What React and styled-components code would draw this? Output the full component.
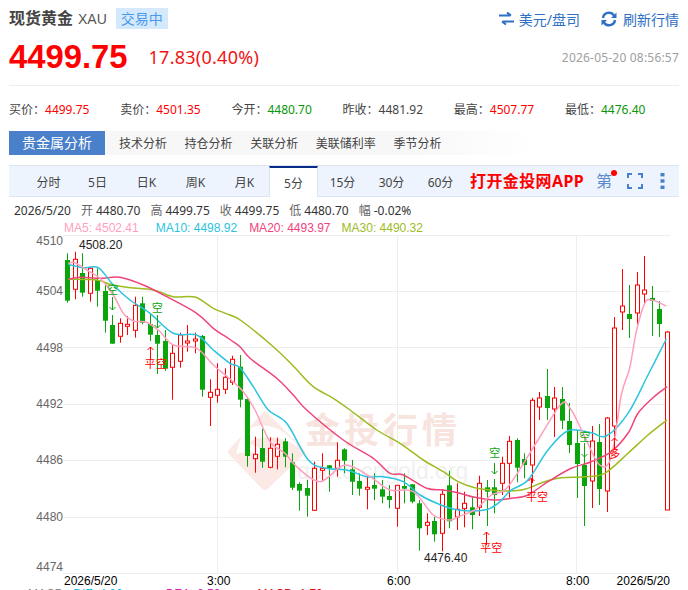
import React from 'react';
import styled, { createGlobalStyle } from 'styled-components';

const Global = createGlobalStyle`
  html, body { margin: 0; padding: 0; background: #fff; height: 590px; overflow: hidden; }
  body { font-family: "Noto Sans", "Noto Sans CJK SC", sans-serif; }
  * { box-sizing: border-box; }
`;
const CJK = `"Noto Sans", "Noto Sans CJK SC", sans-serif`;
const ARIAL = `"Liberation Sans", "Noto Sans CJK SC", sans-serif`;

const Page = styled.div`width: 688px; height: 590px; overflow: hidden; position: relative;`;
const Section = styled.div`margin: 0 9px;`;

const Header = styled(Section)`display: flex; align-items: center; height: 21px; margin-top: 8px;`;
const Title = styled.span`font-size: 16px; font-weight: 700; color: #444; line-height: 21px;`;
const Code = styled.span`font-size: 14px; color: #555; margin-left: 5px; font-family: ${ARIAL};`;
const Badge = styled.span`width: 52px; height: 21px; margin-left: 9px; background: #d5e9fd; color: #4a9ae8; font-size: 14px; line-height: 21px; text-align: center;`;
const Spacer = styled.span`flex: 1;`;
const Action = styled.span`display: flex; align-items: center; gap: 5px; color: #2f6fc4; font-size: 14px; margin-left: ${p => p.$ml || 0}px; white-space: nowrap;`;

const PriceRow = styled(Section)`display: flex; align-items: center; height: 38px; margin-top: 9px;`;
const Price = styled.span`font: 700 32.8px ${ARIAL}; color: #f00;`;
const Change = styled.span`font-size: 18px; color: #f01414; margin-left: 21px; letter-spacing: 0.25px;`;
const Stamp = styled.span`margin-left: auto; font-size: 12px; color: #a0a0a0; letter-spacing: 0.2px;`;

const Stats = styled(Section)`display: grid; grid-template-columns: repeat(6, 111.2px); height: 46px; margin-top: 9px; border-top: 1px solid #eee; align-items: center; padding-top: 1px;`;
const Stat = styled.span`font-size: 12px; color: #444; white-space: nowrap;`;
const StatValue = styled.span`color: ${p => p.$c};`;

const Tabs = styled(Section)`display: flex; height: 24px; background: linear-gradient(90deg, #f7f7f7 0, #f7f7f7 60%, #fff 78%); align-items: center;`;
const TabOn = styled.span`width: 96px; height: 24px; background: #4a7fc9; color: #fff; font-size: 14px; line-height: 24px; text-align: center; margin-right: 14px;`;
const TabItem = styled.span`font-size: 12px; color: #444; margin-right: 17.6px;`;

const Tools = styled(Section)`display: flex; height: 32px; margin-top: 10px; padding-left: 15px; background: #eef4fd; border-top: 1px solid #dde5f2; border-bottom: 1px solid #dde5f2; align-items: stretch; position: relative;`;
const ToolTab = styled.span`
  width: 49px; font-size: 12px; text-align: center; line-height: 34px; color: #444;
  ${p => p.$on ? `background:#fff; border-top:2px solid #0a2a8a; border-left:1px solid #dde5f2; border-right:1px solid #dde5f2; margin-bottom:-1px; line-height:32px;` : ''}
`;
const AppLink = styled.span`margin-left: 5px; font-size: 16px; font-weight: 700; color: #f00; line-height: 31px; width: 114px; white-space: nowrap; letter-spacing: 0.4px;`;
const Di = styled.span`margin-left: 12px; font-size: 16px; color: #5a8ad0; line-height: 31px; position: relative; width: 16px;`;
const Dot = styled.i`position: absolute; left: 15px; top: 4px; width: 6px; height: 6px; border-radius: 50%; background: #f00;`;
const ToolIcon = styled.svg`align-self: center; margin-left: ${p => p.$ml}px; flex: none;`;

const InfoRow = styled.div`display: flex; gap: 10px; height: 16px; margin-top: 6px; padding-left: 14px; font: 12px/16px ${CJK}; color: #333; white-space: nowrap;`;
const InfoItem = styled.span`b { font-weight: 400; color: #666; margin-right: 3px; }`;
const MaRow = styled.div`display: flex; height: 16px; padding-left: 64px; padding-top: 1px; font: 12px/16px ${ARIAL}; white-space: nowrap;`;
const MaItem = styled.span`color: ${p => p.$c}; margin-right: ${p => p.$mr}px;`;

const ChartSvg = styled.svg`display: block; margin-top: -2px; flex: none;`;
const AxisText = styled.text`font: 12px ${ARIAL}; fill: ${p => p.$c || '#666'}; text-anchor: ${p => p.$a || 'start'};`;
const SignalText = styled.text`font: 11px ${CJK}; fill: ${p => p.$c}; text-anchor: middle;`;
const MarkText = styled.text`font: 700 ${p => p.$s}px ${CJK}; fill: ${p => p.$c};`;
const MarkUrl = styled.text`font: 23px ${ARIAL}; fill: #f0f0f0;`;

const Macd = styled.div`position: absolute; left: 28px; top: 587px; display: flex; font: 12px/14px ${ARIAL}; white-space: nowrap;`;
const MacdItem = styled.span`color: ${p => p.$c}; margin-right: ${p => p.$mr}px;`;

const R = 'R', G = 'G';
const candles = [
[G,253.3,260,300.7,302.7],[R,251.7,259.3,289.3,299.3],[G,253.3,273,292.7,296.7],[R,266.7,268.3,293.3,301.7],
[G,268.3,280,290.7,306.7],[G,285,291,320.7,332.7],[G,315,325,343.7,343.7],[R,318.3,323.3,336.3,342.7],
[R,316,324.3,325,335],[R,296.7,305.3,330.3,337.7],[G,296.7,303.3,322.7,324.3],[G,313.3,324,334.7,341],
[G,330,335,343.7,374],[G,330,341,368.7,370.7],[R,345,353.3,367.3,399.7],[R,332.7,335,361.3,367.7],
[R,325,341,341.7,351.7],[R,332.7,339,339.7,353.3],[G,335,336,389.7,396.7],[R,379.3,392.3,397.3,426],
[R,363.3,389.3,395.3,402.7],[R,368.3,377.3,389.3,394],[R,355.7,359.3,382.3,385],[G,355,366.7,399.7,407.3],
[G,397.3,399,456,466.7],[R,436.7,454.3,458.7,472.7],[G,429,448,461.7,467.7],[R,437.3,448.3,467.3,468.3],
[R,437.7,444.3,456.3,469.3],[G,438.3,441.3,456.7,467.3],[G,453.3,462.3,487.7,490],[G,482.3,484,490.7,510.7],
[G,480,488,495.7,516.7],[R,461.7,468.3,510.3,510.7],[R,453.3,468.3,469,482],[G,465,465.3,468.3,491.7],
[R,442.3,460.3,468.3,476.7],[G,448.3,449.3,460.7,473.3],[G,460,469.3,481.7,495],[G,473.3,481,488.7,495.7],
[R,476,487.3,489.3,509.3],[G,473.3,485,488.7,500],[G,480,489.3,496.7,503.3],[G,485,496,500,508.3],
[R,485,485.3,508.3,526.7],[G,473.3,486,488.7,503.3],[G,484,484.3,501.7,503.3],[G,500,503.3,528.3,550.7],
[R,513.3,522.3,525.3,535],[G,516.7,521,534.3,541.7],[R,489,494.3,533.3,551.3],[G,470.7,485.3,521.3,528.3],
[R,483.3,509.3,517,530],[R,491.7,503.3,508.7,527.3],[G,497.3,507.3,515,529.3],[R,475.7,483.3,507.3,516],
[G,480,487.3,491.7,526],[G,479,487.3,495,513.3],[R,456.7,463.3,483.3,495],[R,436,441.3,463.3,497.7],
[G,438.3,440,467.7,482.3],[G,453.3,459,465,478.3],[R,398,400.3,465,483],[R,392,398,407,420],
[G,369,396,408,420],[R,387,398,409,437],[G,387,399,420.7,429],[G,403,421,445,453],
[G,430,443,464,498],[G,443,465,486,526],[R,426,441,481,508],[G,424,442,489,505],
[R,417,418,491,512],[R,317,328,426,447],[R,269,306,312,330],[G,285,314,319,338],
[R,272,285,313,324],[R,256,290,294,305],[G,286,298,301,336],[G,301,309,324,337],[R,331,332,510,510],
];

const ma30 = [[68.3,279.3],[96.7,280],[110,284.3],[126.7,287.3],[153.3,290],[173.3,296.7],[195,297],[213.3,308.3],[230,315],[241.7,321],[273.3,346.7],[293.3,366],[313.3,386.7],[333.3,398.3],[350,410],[376.7,430],[400,443.3],[423.3,460],[443.3,471.7],[458,481.7],[474.7,487.7],[491.3,490],[508,491],[524.7,489.3],[544.7,481.7],[561.3,477.7],[584.7,476.7],[604.7,473.3],[628,453.3],[648,435],[667,420]];
const ma20 = [[68.3,279.3],[80,277.3],[100,278.3],[120,277.3],[143.3,285],[166.7,296.7],[196.7,313.3],[213.3,328.3],[230,339.5],[240,346.7],[250,358.3],[276.7,378.3],[293.3,395],[306.7,410],[343.3,440],[373.3,458.3],[390,473.3],[403.3,475],[426.7,488.3],[443.3,490],[458,492.7],[474.7,497.3],[494.7,500],[511.3,498.3],[528,495],[548,481.7],[571.3,468.3],[591.3,461.7],[611.3,451.7],[628,433.3],[638,413.3],[653,397.7],[667,386.7]];
const ma10 = [[68.3,264.3],[83.3,267.7],[98.3,267.7],[113.3,285],[130,300],[150,313.3],[173.3,333.3],[196.7,335],[213.3,350],[230,363.3],[240,367.7],[253.3,386.7],[268.3,410],[286.7,423.3],[308.3,460],[326.7,468.3],[346.7,470],[366.7,476.7],[383.3,476.7],[403.3,481.7],[420,495],[436.7,503.3],[458,510],[484.7,510],[498,503.3],[511.3,490],[528,480],[548,450],[568,430.7],[591.3,432.7],[606.3,436],[628,413.3],[648,375],[666.3,339]];
const ma5 = [[68.3,263.3],[75,262.7],[86.7,270],[100,278.3],[113.3,295],[123.3,313.3],[133.3,321],[146.7,322.3],[160,331.7],[173.3,345],[196.7,348.3],[213.3,365],[230,379],[243.3,391.7],[255,410],[270,441.7],[285,453.3],[296.7,466.7],[320,481.7],[345,465],[370,476.7],[390,490],[413.3,491.7],[433.3,515],[450,520],[458,516.7],[474.7,510],[491.3,495],[508,486.7],[538,440],[561.3,404],[571.3,410],[584.7,436.7],[599.7,465],[611.3,456.7],[621.3,395],[629.7,368],[636.3,331.7],[644.7,303.3],[652,300],[666.3,306]];

const smooth = pts => {
  let d = `M${pts[0][0]} ${pts[0][1]}`;
  for (let i = 0; i < pts.length - 1; i++) {
    const p0 = pts[i - 1] || pts[i], p1 = pts[i], p2 = pts[i + 1], p3 = pts[i + 2] || p2;
    const c1x = p1[0] + (p2[0] - p0[0]) / 6, c1y = p1[1] + (p2[1] - p0[1]) / 6;
    const c2x = p2[0] - (p3[0] - p1[0]) / 6, c2y = p2[1] - (p3[1] - p1[1]) / 6;
    d += `C${c1x.toFixed(1)} ${c1y.toFixed(1)} ${c2x.toFixed(1)} ${c2y.toFixed(1)} ${p2[0]} ${p2[1]}`;
  }
  return d;
};

const RED = '#f00', GREEN = '#0aa50a';
const Candle = ({ d, i }) => {
  const x = Math.round(67.3 + 7.49 * i) + 0.5;
  const [t, hi, top, bot, lo] = d;
  const c = t === R ? RED : GREEN;
  return (
    <g>
      <line x1={x} x2={x} y1={hi} y2={lo} stroke={c} strokeWidth="1" />
      {t === R
        ? <rect x={x - 2} y={top} width="4" height={Math.max(bot - top, 2)} fill="#fff" stroke={c} strokeWidth="1" />
        : <rect x={x - 2.5} y={top} width="5" height={bot - top} fill={c} />}
    </g>
  );
};

const Arrow = ({ x, y1, y2, c, up }) => (
  <path d={up
    ? `M${x} ${y2}V${y1}M${x - 3} ${y1 + 3}L${x} ${y1}L${x + 3} ${y1 + 3}`
    : `M${x} ${y1}V${y2}M${x - 3} ${y2 - 3}L${x} ${y2}L${x + 3} ${y2 - 3}`}
    stroke={c} strokeWidth="1" fill="none" />
);

const grid = [235.5, 291.5, 347.5, 404.5, 460.5, 517.5, 573.5];
const vgrid = [217.5, 397.5, 576.5];
const axis = [['4510', 245], ['4504', 295], ['4498', 352], ['4492', 408], ['4486', 464], ['4480', 521], ['4474', 571]];

const Chart = () => (
  <ChartSvg width="688" height="360" viewBox="0 233 688 360">
    {grid.map(y => <line key={y} x1="63" x2="670" y1={y} y2={y} stroke="#eee" />)}
    {vgrid.map(x => <line key={x} x1={x} x2={x} y1="235" y2="573" stroke="#eee" />)}
    {axis.map(([t, y]) => <AxisText key={t} x="63" y={y} $a="end">{t}</AxisText>)}

    <path d="M265 412L303 450Q305 452 303 454L267 488Q265 490 263 488L230 454Q228 452 230 450Z" fill="#fae9e5" stroke="#fae9e5" strokeWidth="2" strokeLinejoin="round" />
    <path d="M243 433C258 419 284 425 298 447C282 436 262 434 246 443C256 445 264 450 268 458C258 452 246 451 236 454C238 446 240 439 243 433Z" fill="#fff" />
    <MarkText x="305" y="443" $s="35" $c="#f8e4df" textLength="152">金投行情</MarkText>
    <MarkUrl x="297" y="479">quote.cngold.org</MarkUrl>

    {candles.map((d, i) => <Candle key={i} d={d} i={i} />)}
    <path d={smooth(ma30)} fill="none" stroke="#9cbc1f" strokeWidth="1.5" />
    <path d={smooth(ma20)} fill="none" stroke="#f0447c" strokeWidth="1.5" />
    <path d={smooth(ma10)} fill="none" stroke="#2bc4e0" strokeWidth="1.5" />
    <path d={smooth(ma5)} fill="none" stroke="#ff9fc0" strokeWidth="1.5" />

    <SignalText x="112.7" y="294" $c={GREEN}>空</SignalText>
    <Arrow x={112.5} y1={297} y2={310} c={GREEN} />
    <SignalText x="157.3" y="312" $c={GREEN}>空</SignalText>
    <Arrow x={157.5} y1={315} y2={328} c={GREEN} />
    <SignalText x="155.7" y="368" $c={RED}>平空</SignalText>
    <Arrow x={150.5} y1={347} y2={360} c={RED} up />
    <SignalText x="494.7" y="457" $c={GREEN}>空</SignalText>
    <Arrow x={494.5} y1={463} y2={474} c={GREEN} />
    <SignalText x="537" y="501" $c={RED}>平空</SignalText>
    <Arrow x={531.5} y1={478} y2={492} c={RED} up />
    <SignalText x="491.3" y="552" $c={RED}>平空</SignalText>
    <Arrow x={486.5} y1={532} y2={545} c={RED} up />
    <SignalText x="584.7" y="441" $c={GREEN}>空</SignalText>
    <Arrow x={584.5} y1={443} y2={457} c={GREEN} />
    <SignalText x="614.7" y="458" $c={RED}>多</SignalText>
    <Arrow x={614.5} y1={438} y2={449} c={RED} up />

    <AxisText x="79" y="249" $c="#222">4508.20</AxisText>
    <AxisText x="424" y="562" $c="#222">4476.40</AxisText>
    <AxisText x="64" y="585" $c="#000">2026/5/20</AxisText>
    <AxisText x="207" y="585" $c="#000">3:00</AxisText>
    <AxisText x="387" y="585" $c="#000">6:00</AxisText>
    <AxisText x="566" y="585" $c="#000">8:00</AxisText>
    <AxisText x="670" y="585" $c="#000" $a="end">2026/5/20</AxisText>
  </ChartSvg>
);

const stats = [
  ['买价', '4499.75', '#f00'], ['卖价', '4501.35', '#f00'], ['今开', '4480.70', '#0a960a'],
  ['昨收', '4481.92', '#444'], ['最高', '4507.77', '#f00'], ['最低', '4476.40', '#0a960a'],
];
const times = ['分时', '5日', '日K', '周K', '月K', '5分', '15分', '30分', '60分'];
const analysis = ['技术分析', '持仓分析', '关联分析', '美联储利率', '季节分析'];
const info = [['开', '4480.70'], ['高', '4499.75'], ['收', '4499.75'], ['低', '4480.70'], ['幅', '-0.02%']];

export default function App() {
  return (
    <Page>
      <Global />
      <Header>
        <Title>现货黄金</Title>
        <Code>XAU</Code>
        <Badge>交易中</Badge>
        <Spacer />
        <Action>
          <svg width="15" height="13" viewBox="0 0 15 13">
            <path d="M0 3.5H11.5M8 0.5L12 3.5" stroke="#2f6fc4" strokeWidth="2" fill="none" />
            <path d="M15 9.5H3.5M7 12.5L3 9.5" stroke="#2f6fc4" strokeWidth="2" fill="none" />
          </svg>
          美元/盘司
        </Action>
        <Action $ml={20}>
          <svg width="18" height="18" viewBox="0 0 18 18">
            <path d="M3 8A6 6 0 0 1 14 5.5M15 10A6 6 0 0 1 4 12.5" stroke="#2f6fc4" strokeWidth="2.4" fill="none" />
            <path d="M16.5 2.5V8H11ZM1.5 15.5V10H7Z" fill="#2f6fc4" />
          </svg>
          刷新行情
        </Action>
      </Header>
      <PriceRow>
        <Price>4499.75</Price>
        <Change>17.83(0.40%)</Change>
        <Stamp>2026-05-20 08:56:57</Stamp>
      </PriceRow>
      <Stats>
        {stats.map(([l, v, c]) => <Stat key={l}>{l}：<StatValue $c={c}>{v}</StatValue></Stat>)}
      </Stats>
      <Tabs>
        <TabOn>贵金属分析</TabOn>
        {analysis.map(t => <TabItem key={t}>{t}</TabItem>)}
      </Tabs>
      <Tools>
        {times.map(t => <ToolTab key={t} $on={t === '5分'}>{t}</ToolTab>)}
        <AppLink>打开金投网APP</AppLink>
        <Di>第<Dot /></Di>
        <ToolIcon $ml={15} width="16" height="16" viewBox="0 0 16 16">
          <path d="M5 1H1V5M11 1H15V5M5 15H1V11M11 15H15V11" stroke="#4a7fc9" strokeWidth="2" fill="none" />
        </ToolIcon>
        <ToolIcon $ml={17} width="5" height="16" viewBox="0 0 5 16">
          <rect x="0.5" y="0" width="4" height="3.4" fill="#4a7fc9" />
          <rect x="0.5" y="6.3" width="4" height="3.4" fill="#4a7fc9" />
          <rect x="0.5" y="12.6" width="4" height="3.4" fill="#4a7fc9" />
        </ToolIcon>
      </Tools>
      <InfoRow>
        <span>2026/5/20</span>
        {info.map(([l, v]) => <InfoItem key={l}><b>{l}</b>{v}</InfoItem>)}
      </InfoRow>
      <MaRow>
        <MaItem $c="#ff9fc0" $mr={17}>MA5: 4502.41</MaItem>
        <MaItem $c="#2bc4e0" $mr={12}>MA10: 4498.92</MaItem>
        <MaItem $c="#f0447c" $mr={11}>MA20: 4493.97</MaItem>
        <MaItem $c="#9cbc1f" $mr={0}>MA30: 4490.32</MaItem>
      </MaRow>
      <Chart />
      <Macd>
        <MacdItem $c="#888" $mr={10}>MACD</MacdItem>
        <MacdItem $c="#10c0f0" $mr={43}>DIF: 4.00</MacdItem>
        <MacdItem $c="#e020c0" $mr={37}>DEA: 0.50</MacdItem>
        <MacdItem $c="#e01010" $mr={0}>MACD: 1.70</MacdItem>
      </Macd>
    </Page>
  );
}
